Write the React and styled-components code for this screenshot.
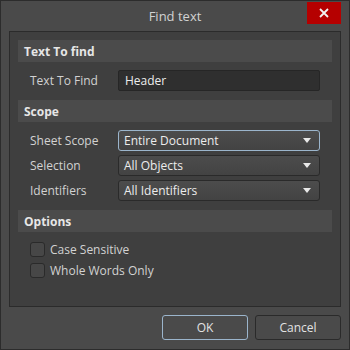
import React from 'react';
import styled, { createGlobalStyle } from 'styled-components';

const GlobalStyle = createGlobalStyle`
  html, body { margin: 0; padding: 0; background: #4a4a4a; }
  body { font-family: "Open Sans", "Noto Sans", sans-serif; }
`;

const Window = styled.div`
  width: 350px;
  height: 350px;
  box-sizing: border-box;
  background: #4a4a4a;
  border: 1px solid #2c2c2c;
  display: flex;
  flex-direction: column;
`;

const TitleBar = styled.div`
  position: relative;
  height: 30px;
  display: flex;
  align-items: center;
  justify-content: center;
  color: #d2d2d2;
  font-size: 13px;
`;

const CloseButton = styled.div`
  position: absolute;
  top: 1px;
  right: 8px;
  width: 34px;
  height: 22px;
  background: #b50000;
  display: flex;
  align-items: center;
  justify-content: center;
`;

const Panel = styled.div`
  margin: 0 8px;
  height: 276px;
  box-sizing: border-box;
  background: #3f3f3f;
  border: 1px solid #2b2b2b;
  padding: 8px 8px;
  display: flex;
  flex-direction: column;
`;

const SectionHeader = styled.div`
  height: 22px;
  background: #4b4b4b;
  color: #e6e6e6;
  font-size: 12px;
  font-weight: 700;
  display: flex;
  align-items: center;
  padding-left: 6px;
  margin-top: ${(p) => p.$top || 0}px;
`;

const Rows = styled.div`
  display: flex;
  flex-direction: column;
  gap: ${(p) => p.$gap || 4}px;
  padding: ${(p) => p.$top || 8}px 12px 0 12px;
`;

const Row = styled.div`
  display: grid;
  grid-template-columns: 88px 1fr;
  align-items: center;
`;

const Label = styled.div`
  color: #d2d2d2;
  font-size: 12px;
`;

const TextInput = styled.div`
  height: 21px;
  box-sizing: border-box;
  background: #2f2f2f;
  border: 1px solid #262626;
  border-radius: 2px;
  color: #ececec;
  font-size: 12px;
  display: flex;
  align-items: center;
  padding-left: 6px;
`;

const Select = styled.div`
  height: 21px;
  box-sizing: border-box;
  background: linear-gradient(#4c4c4c, #434343);
  border: 1px solid ${(p) => (p.$focused ? '#9bb5cc' : '#2a2a2a')};
  border-radius: 3px;
  color: #ececec;
  font-size: 12px;
  display: flex;
  align-items: center;
  justify-content: space-between;
  padding: 0 8px 0 5px;
`;

const CheckRow = styled.div`
  display: flex;
  align-items: center;
  gap: 5px;
  height: 15px;
  line-height: 15px;
  color: #d2d2d2;
  font-size: 12px;
`;

const Box = styled.div`
  width: 15px;
  height: 15px;
  box-sizing: border-box;
  background: #474747;
  border: 1px solid #2a2a2a;
  border-radius: 3px;
`;

const Footer = styled.div`
  display: flex;
  justify-content: flex-end;
  gap: 7px;
  padding: 8px 8px 0 0;
`;

const Button = styled.div`
  width: 86px;
  height: 25px;
  box-sizing: border-box;
  background: #4a4a4a;
  border: 1px solid ${(p) => (p.$primary ? '#9bb5cc' : '#2a2a2a')};
  border-radius: 3px;
  color: #e2e2e2;
  font-size: 12px;
  display: flex;
  align-items: center;
  justify-content: center;
`;

const Arrow = () => (
  <svg width="8" height="5" viewBox="0 0 8 5">
    <path d="M0 0 L8 0 L4 5 Z" fill="#e8e8e8" />
  </svg>
);

const CloseIcon = () => (
  <svg width="10" height="10" viewBox="0 0 10 10">
    <path d="M1 1 L9 9 M9 1 L1 9" stroke="#f2f2f2" strokeWidth="1.8" />
  </svg>
);

const scopeRows = [
  { label: 'Sheet Scope', value: 'Entire Document', focused: true },
  { label: 'Selection', value: 'All Objects' },
  { label: 'Identifiers', value: 'All Identifiers' },
];

export default function App() {
  return (
    <>
      <GlobalStyle />
      <Window>
        <TitleBar>
          Find text
          <CloseButton><CloseIcon /></CloseButton>
        </TitleBar>
        <Panel>
          <SectionHeader>Text To find</SectionHeader>
          <Rows>
            <Row>
              <Label>Text To Find</Label>
              <TextInput>Header</TextInput>
            </Row>
          </Rows>
          <SectionHeader $top={9}>Scope</SectionHeader>
          <Rows>
            {scopeRows.map((r) => (
              <Row key={r.label}>
                <Label>{r.label}</Label>
                <Select $focused={r.focused}>
                  {r.value}
                  <Arrow />
                </Select>
              </Row>
            ))}
          </Rows>
          <SectionHeader $top={9}>Options</SectionHeader>
          <Rows $gap={6} $top={10}>
            <CheckRow><Box />Case Sensitive</CheckRow>
            <CheckRow><Box />Whole Words Only</CheckRow>
          </Rows>
        </Panel>
        <Footer>
          <Button $primary>OK</Button>
          <Button>Cancel</Button>
        </Footer>
      </Window>
    </>
  );
}
